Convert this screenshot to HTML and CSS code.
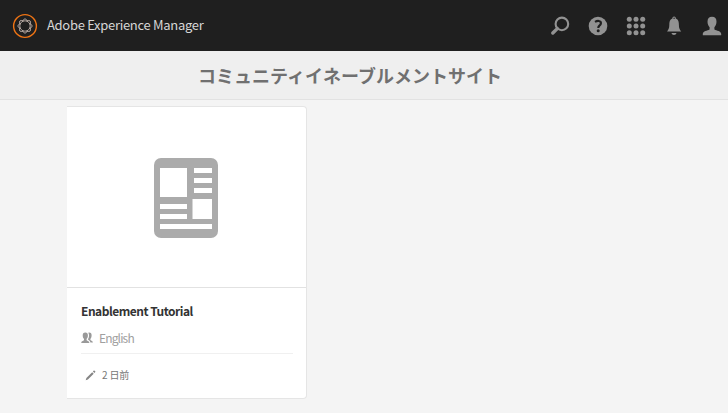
FILE: index.html
```html
<!DOCTYPE html>
<html lang="ja">
<head>
<meta charset="utf-8">
<title>Adobe Experience Manager</title>
<link rel="stylesheet" href="styles.css">
</head>
<body>
<header class="topbar">
  <svg class="logo" viewBox="0 0 26 26" fill="none">
    <circle cx="13" cy="13" r="11.400" stroke="#ef7414" stroke-width="1.400"/>
    <g stroke="#cbbdb5" stroke-width=".8">
      <circle cx="13" cy="13" r="5.200"/>
      <path d="M10.500 8.300Q13 3.300 15.500 8.300M10.500 17.700Q13 22.700 15.500 17.700M8.300 10.500Q3.300 13 8.300 15.500M17.700 10.500Q22.700 13 17.700 15.500"/>
      <path d="M10.500 8.300Q13 3.300 15.500 8.300M10.500 17.700Q13 22.700 15.500 17.700M8.300 10.500Q3.300 13 8.300 15.500M17.700 10.500Q22.700 13 17.700 15.500" transform="rotate(45 13 13)"/>
    </g>
  </svg>
  <span class="brand">Adobe Experience Manager</span>
  <nav class="actions">
    <svg class="action" viewBox="0 0 20 20" fill="none" stroke="#929292">
      <circle cx="11.900" cy="7.900" r="6.300" stroke-width="2.100"/>
      <path d="M7.300 12.600L2.800 17" stroke-width="3.400" stroke-linecap="round"/>
    </svg>
    <svg class="action" viewBox="0 0 20 20">
      <circle cx="10" cy="10" r="9.300" fill="#929292"/>
      <path d="M7 5.900Q9 4.800 10.700 5Q13 5.300 12.900 7.300Q12.900 8.500 11.400 9.700Q10.200 10.700 10.300 12" fill="none" stroke="#1f1f1f" stroke-width="2.200"/>
      <circle cx="10.200" cy="14.800" r="1.500" fill="#1f1f1f"/>
    </svg>
    <svg class="action" viewBox="0 0 20 20" fill="#929292">
      <circle cx="3.300" cy="3.300" r="2.500"/><circle cx="10" cy="3.300" r="2.500"/><circle cx="16.700" cy="3.300" r="2.500"/>
      <circle cx="3.300" cy="10" r="2.500"/><circle cx="10" cy="10" r="2.500"/><circle cx="16.700" cy="10" r="2.500"/>
      <circle cx="3.300" cy="16.700" r="2.500"/><circle cx="10" cy="16.700" r="2.500"/><circle cx="16.700" cy="16.700" r="2.500"/>
    </svg>
    <svg class="action" viewBox="0 0 20 20" fill="#929292">
      <path d="M8.300 2.500Q8.400.6 10.100.6T11.900 2.500C14.500 3.700 14.900 6 14.900 9C14.900 12.300 15.800 13.800 17.200 15.500H3C4.400 13.800 5.300 12.300 5.300 9C5.300 6 5.700 3.700 8.300 2.500ZM7.400 17H12.600Q12 19 10 19T7.400 17Z"/>
      <circle cx="10.100" cy="2.200" r=".7" fill="#1f1f1f"/>
    </svg>
    <svg class="action" viewBox="0 0 20 20" fill="#929292">
      <path d="M10 .8C13 .8 14.500 2.700 14.500 5.700C14.500 8.500 13.400 10 12.400 11.200V13.400C14.500 14.800 19.200 14.800 19.200 18V19.200H.8V18C.8 14.800 5.500 14.800 7.600 13.400V11.200C6.600 10 5.500 8.500 5.500 5.700C5.500 2.700 7 .8 10 .8Z"/>
    </svg>
  </nav>
</header>
<div class="titlebar"><h1 class="title">コミュニティイネーブルメントサイト</h1></div>
<main class="content">
  <article class="card">
    <div class="preview">
      <svg class="page-icon" viewBox="0 0 64 80">
        <rect width="64" height="80" rx="7" fill="#ababab"/>
        <path fill="#fff" d="M6 10H33V39H6ZM40 10H58V15H40ZM40 20H58V25H40ZM40 30H58V35H40ZM38.500 41H58V61H38.500ZM6 46H33V51H6ZM6 56H33V61H6ZM6 66H58V71H6Z"/>
      </svg>
    </div>
    <div class="details">
      <h2 class="name">Enablement Tutorial</h2>
      <div class="language">
        <svg class="people" viewBox="0 0 12 12" fill="#999">
          <path d="M4.300.5C6.200.5 6.900 1.700 6.900 3.600C6.900 5.400 6.200 6.400 5.600 7V8.200C6.700 9 8.200 8.900 8.400 11H.2C.3 8.900 1.900 9 3 8.200V7C2.400 6.400 1.700 5.400 1.700 3.600C1.700 1.700 2.400.5 4.300.5Z"/>
          <path d="M7.300.7C9.700.3 10.700 1.500 10.600 3.500C10.600 5.100 10.100 6.200 9.400 6.900V8C10.300 8.800 11.800 8.800 11.900 10.500H9.400C9.100 8.900 8.300 8.400 7.100 7.800V7C8.300 5 8.400 2.500 7.300.7Z"/>
        </svg>
        <span>English</span>
      </div>
      <div class="modified">
        <svg class="pencil" viewBox="0 0 11 11" fill="#858585">
          <path d="M.7 10.300L1.400 8L7.200 2.200L8.700 3.700L2.900 9.500ZM7.900 1.500L8.800.6Q9.200.3 9.600.7L10.200 1.300Q10.600 1.700 10.300 2.100L9.400 3Z"/>
        </svg>
        <span>2 日前</span>
      </div>
    </div>
  </article>
</main>
</body>
</html>
```

FILE: styles.css
```css
* { box-sizing: border-box; }
body {
  margin: 0;
  height: 413px;
  overflow: hidden;
  background: #f4f4f4;
  font-family: "Noto Sans CJK JP", "Noto Sans", sans-serif;
}
.topbar {
  display: flex;
  align-items: center;
  height: 51px;
  padding-left: 12px;
  background: #1f1f1f;
}
.logo { width: 26px; height: 26px; }
.brand {
  margin: -2px 0 0 9px;
  color: #d6d6d6;
  font-size: 13px;
  letter-spacing: -0.3px;
  line-height: 20px;
  white-space: nowrap;
}
.actions { display: flex; gap: 18px; margin-left: auto; padding-right: 6px; }
.action { width: 20px; height: 20px; }
.titlebar {
  height: 49px;
  padding-right: 28px;
  background: #efefef;
  border-bottom: 1px solid #e2e2e2;
}
.title {
  margin: 0;
  color: #707070;
  font-size: 18px;
  font-weight: 700;
  line-height: 48px;
  text-align: center;
}
.content { padding: 6px 0 0 67px; }
.card {
  width: 240px;
  height: 293px;
  background: #fff;
  border: 1px solid #e5e5e5;
  border-left: 0;
  border-radius: 0 4px 4px 0;
}
.preview {
  display: flex;
  align-items: center;
  justify-content: center;
  height: 181px;
  padding: 2px 2px 0 0;
  border-bottom: 1px solid #e2e2e2;
}
.page-icon { width: 64px; height: 80px; }
.details { padding: 13px 13px 0 14px; }
.name {
  margin: 0;
  color: #333;
  font-size: 12px;
  font-weight: 700;
  letter-spacing: -0.5px;
  line-height: 20px;
}
.language {
  display: flex;
  align-items: center;
  gap: 6px;
  height: 33px;
  padding-top: 1px;
  border-bottom: 1px solid #f0f0f0;
  color: #a0a0a0;
  font-size: 12px;
  letter-spacing: -0.85px;
  line-height: 20px;
}
.people { width: 12px; height: 12px; }
.modified {
  display: flex;
  align-items: center;
  gap: 6px;
  height: 42px;
  padding-left: 4px;
  color: #777;
  font-size: 10px;
  letter-spacing: -0.2px;
  line-height: 18px;
}
.pencil { width: 11px; height: 11px; }
```
